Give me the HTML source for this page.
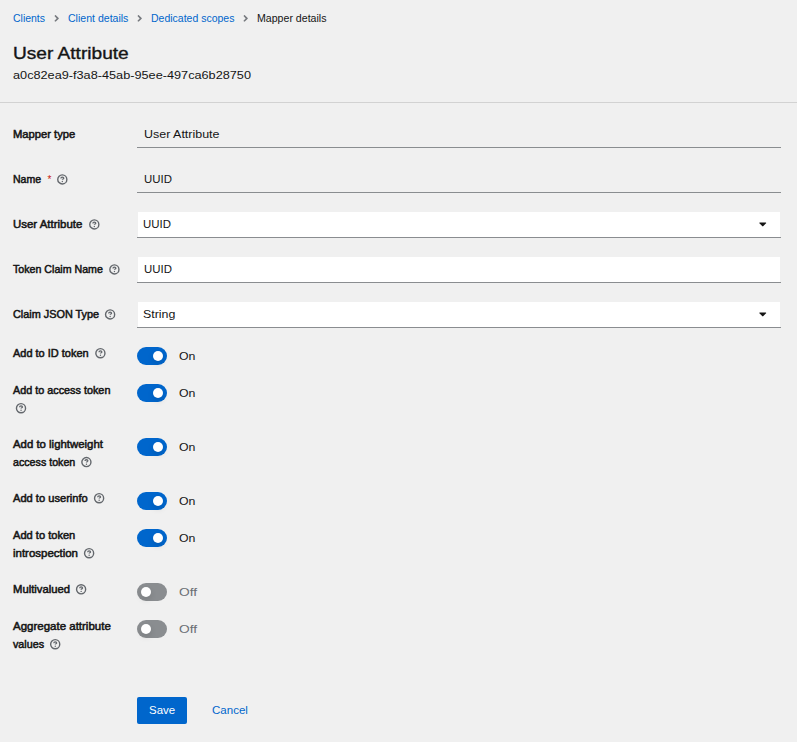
<!DOCTYPE html>
<html lang="en">
<head>
<meta charset="utf-8">
<title>Mapper details</title>
<style>
*{box-sizing:border-box;margin:0;padding:0}
html,body{width:797px;height:742px;overflow:hidden;background:#f0f0f0}
body{position:relative;font-family:"Liberation Sans",sans-serif;color:#151515;font-size:12px}
.t{position:absolute;white-space:nowrap;text-decoration:none;display:block;transform-origin:0 50%}
.chev{position:absolute;width:5.4px;height:10.8px}
.hr{position:absolute;left:0;top:102px;width:797px;height:1px;background:#d2d2d2}
.wb{position:absolute;left:137.8px;width:642.3px;height:25px;background:#fff}
.bl{position:absolute;left:137px;width:643.7px;height:1px;background:#8a8d90}
.caret{position:absolute;left:759.4px;width:7.5px;height:12px}
.help{position:absolute;width:14px;height:14px}
.sw{position:absolute;left:137px;width:30px;height:18px;border-radius:9px;background:#0066cc}
.sw.off{background:#8a8d90}
.sw i{position:absolute;top:4px;width:10.4px;height:10.4px;border-radius:50%;background:#fff;top:3.8px;box-shadow:0 3px 6px rgba(3,3,3,.12)}
.sw.on i{left:16px}
.sw.off i{left:4px}
.btn{position:absolute;left:137px;top:697px;width:50px;height:27px;background:#0066cc;border:0;border-radius:2px;font:inherit;display:block}
</style>
</head>
<body>
<nav class="breadcrumb" aria-label="Breadcrumb">
<a class="t" style="left:13.0px;top:10.79px;font-size:11px;line-height:14px;height:14px;transform:scaleX(0.9517);color:#0066cc;font-weight:normal">Clients</a>
<svg class="chev" style="left:53.6px;top:13px" viewBox="0 0 256 512"><path d="M224.3 273l-136 136c-9.4 9.4-24.6 9.4-33.9 0l-22.6-22.600c-9.400-9.400-9.400-24.600 0-33.900l96.400-96.400-96.400-96.400c-9.400-9.400-9.400-24.600 0-33.900L54.300 103c9.400-9.400 24.600-9.400 33.900 0l136 136c9.500 9.400 9.500 24.600.100 34z" fill="#777a7f"/></svg>
<a class="t" style="left:68.3px;top:10.79px;font-size:11px;line-height:14px;height:14px;transform:scaleX(0.9590);color:#0066cc;font-weight:normal">Client details</a>
<svg class="chev" style="left:137.2px;top:13px" viewBox="0 0 256 512"><path d="M224.3 273l-136 136c-9.4 9.4-24.6 9.4-33.9 0l-22.6-22.600c-9.400-9.400-9.400-24.600 0-33.900l96.400-96.400-96.400-96.400c-9.400-9.400-9.400-24.600 0-33.900L54.300 103c9.400-9.400 24.600-9.400 33.900 0l136 136c9.500 9.400 9.500 24.600.100 34z" fill="#777a7f"/></svg>
<a class="t" style="left:151.3px;top:10.79px;font-size:11px;line-height:14px;height:14px;transform:scaleX(0.9537);color:#0066cc;font-weight:normal">Dedicated scopes</a>
<svg class="chev" style="left:243.3px;top:13px" viewBox="0 0 256 512"><path d="M224.3 273l-136 136c-9.4 9.4-24.6 9.4-33.9 0l-22.6-22.600c-9.400-9.400-9.400-24.600 0-33.900l96.400-96.400-96.400-96.400c-9.400-9.400-9.400-24.600 0-33.900L54.300 103c9.400-9.400 24.600-9.400 33.900 0l136 136c9.500 9.400 9.500 24.600.100 34z" fill="#777a7f"/></svg>
<span class="t" style="left:257.3px;top:10.79px;font-size:11px;line-height:14px;height:14px;transform:scaleX(0.9632);color:#151515;font-weight:normal">Mapper details</span>
</nav>
<header class="head">
<h1 class="t" style="left:13.0px;top:42.66px;font-size:16px;line-height:22px;height:22px;transform:scaleX(1.1936);color:#151515;font-weight:normal;-webkit-text-stroke:0.35px #151515">User Attribute</h1>
<span class="t" style="left:13.0px;top:68.19px;font-size:11px;line-height:14px;height:14px;transform:scaleX(1.1546);color:#151515;font-weight:normal">a0c82ea9-f3a8-45ab-95ee-497ca6b28750</span>
</header>
<div class="hr"></div>
<form class="form">
<div class="group">
<label class="t" style="left:13.0px;top:127.36px;font-size:10.5px;line-height:14px;height:14px;transform:scaleX(1.0672);color:#151515;font-weight:normal;-webkit-text-stroke:0.5px #151515">Mapper type</label>
<div class="bl" style="top:147px"></div>
<span class="t" style="left:144.3px;top:127.49px;font-size:11px;line-height:14px;height:14px;transform:scaleX(1.1329);color:#151515;font-weight:normal">User Attribute</span>
</div>
<div class="group">
<label class="t" style="left:13.0px;top:172.36px;font-size:10.5px;line-height:14px;height:14px;transform:scaleX(1.0030);color:#151515;font-weight:normal;-webkit-text-stroke:0.5px #151515">Name</label>
<span class="t" style="left:47.6px;top:172.73px;font-size:10px;line-height:14px;height:14px;transform:scaleX(1.0000);color:#c9190b;font-weight:normal">*</span>
<svg class="help" style="left:55px;top:172px" viewBox="0 0 14 14"><g transform="translate(1.30 1.40)"><circle cx="6" cy="6" r="4.55" fill="none" stroke="#63676c" stroke-width="1.4"/><path d="M4.6 5c0-.85.6-1.350 1.450-1.350s1.400.500 1.400 1.100c0 .900-1.400.800-1.400 1.650" fill="none" stroke="#63676c" stroke-width="1.3"/><circle cx="6.05" cy="8.1" r=".7" fill="#63676c"/></g></svg>
<div class="bl" style="top:192px"></div>
<span class="t" style="left:144.4px;top:172.09px;font-size:11px;line-height:14px;height:14px;transform:scaleX(1.0375);color:#151515;font-weight:normal">UUID</span>
</div>
<div class="group">
<label class="t" style="left:13.0px;top:217.36px;font-size:10.5px;line-height:14px;height:14px;transform:scaleX(1.0892);color:#151515;font-weight:normal;-webkit-text-stroke:0.5px #151515">User Attribute</label>
<svg class="help" style="left:87px;top:217px" viewBox="0 0 14 14"><g transform="translate(1.30 1.40)"><circle cx="6" cy="6" r="4.55" fill="none" stroke="#63676c" stroke-width="1.4"/><path d="M4.6 5c0-.85.6-1.350 1.450-1.350s1.400.500 1.400 1.100c0 .900-1.400.800-1.400 1.650" fill="none" stroke="#63676c" stroke-width="1.3"/><circle cx="6.05" cy="8.1" r=".7" fill="#63676c"/></g></svg>
<div class="wb" style="top:212px"></div><div class="bl" style="top:237px"></div><svg class="caret" style="top:217.6px" viewBox="0 0 320 512"><path d="M31.3 192h257.3c17.8 0 26.7 21.5 14.1 34.1L174.1 354.8c-7.8 7.8-20.5 7.8-28.3 0L17.2 226.1C4.600 213.500 13.500 192 31.300 192z" fill="#151515"/></svg>
<span class="t" style="left:143.3px;top:216.99px;font-size:11px;line-height:14px;height:14px;transform:scaleX(1.0375);color:#151515;font-weight:normal">UUID</span>
</div>
<div class="group">
<label class="t" style="left:13.0px;top:262.36px;font-size:10.5px;line-height:14px;height:14px;transform:scaleX(1.0135);color:#151515;font-weight:normal;-webkit-text-stroke:0.5px #151515">Token Claim Name</label>
<svg class="help" style="left:107px;top:262px" viewBox="0 0 14 14"><g transform="translate(1.40 1.40)"><circle cx="6" cy="6" r="4.55" fill="none" stroke="#63676c" stroke-width="1.4"/><path d="M4.6 5c0-.85.6-1.350 1.450-1.350s1.400.500 1.400 1.100c0 .900-1.400.800-1.400 1.650" fill="none" stroke="#63676c" stroke-width="1.3"/><circle cx="6.05" cy="8.1" r=".7" fill="#63676c"/></g></svg>
<div class="wb" style="top:257px"></div><div class="bl" style="top:282px"></div>
<span class="t" style="left:144.4px;top:261.89px;font-size:11px;line-height:14px;height:14px;transform:scaleX(1.0375);color:#151515;font-weight:normal">UUID</span>
</div>
<div class="group">
<label class="t" style="left:13.0px;top:307.36px;font-size:10.5px;line-height:14px;height:14px;transform:scaleX(1.0342);color:#151515;font-weight:normal;-webkit-text-stroke:0.5px #151515">Claim JSON Type</label>
<svg class="help" style="left:103px;top:307px" viewBox="0 0 14 14"><g transform="translate(1.10 1.40)"><circle cx="6" cy="6" r="4.55" fill="none" stroke="#63676c" stroke-width="1.4"/><path d="M4.6 5c0-.85.6-1.350 1.450-1.350s1.400.500 1.400 1.100c0 .900-1.400.800-1.400 1.650" fill="none" stroke="#63676c" stroke-width="1.3"/><circle cx="6.05" cy="8.1" r=".7" fill="#63676c"/></g></svg>
<div class="wb" style="top:302px"></div><div class="bl" style="top:327px"></div><svg class="caret" style="top:307.6px" viewBox="0 0 320 512"><path d="M31.3 192h257.3c17.8 0 26.7 21.5 14.1 34.1L174.1 354.8c-7.8 7.8-20.5 7.8-28.3 0L17.2 226.1C4.600 213.500 13.500 192 31.300 192z" fill="#151515"/></svg>
<span class="t" style="left:143.4px;top:306.99px;font-size:11px;line-height:14px;height:14px;transform:scaleX(1.1270);color:#151515;font-weight:normal">String</span>
</div>
<div class="group">
<label class="t" style="left:13.0px;top:346.36px;font-size:10.5px;line-height:14px;height:14px;transform:scaleX(1.0443);color:#151515;font-weight:normal;-webkit-text-stroke:0.5px #151515">Add to ID token</label>
<svg class="help" style="left:93px;top:346px" viewBox="0 0 14 14"><g transform="translate(1.40 1.20)"><circle cx="6" cy="6" r="4.55" fill="none" stroke="#63676c" stroke-width="1.4"/><path d="M4.6 5c0-.85.6-1.350 1.450-1.350s1.400.500 1.400 1.100c0 .900-1.400.800-1.400 1.650" fill="none" stroke="#63676c" stroke-width="1.3"/><circle cx="6.05" cy="8.1" r=".7" fill="#63676c"/></g></svg>
<div class="sw on" style="top:347px"><i></i></div>
<span class="t" style="left:179.3px;top:349.29px;font-size:11px;line-height:14px;height:14px;transform:scaleX(1.1166);color:#151515;font-weight:normal">On</span>
</div>
<div class="group">
<label class="t" style="left:13.0px;top:383.36px;font-size:10.5px;line-height:14px;height:14px;transform:scaleX(1.0300);color:#151515;font-weight:normal;-webkit-text-stroke:0.5px #151515">Add to access token</label>
<svg class="help" style="left:14px;top:401px" viewBox="0 0 14 14"><g transform="translate(1.00 1.20)"><circle cx="6" cy="6" r="4.55" fill="none" stroke="#63676c" stroke-width="1.4"/><path d="M4.6 5c0-.85.6-1.350 1.450-1.350s1.400.500 1.400 1.100c0 .900-1.400.800-1.400 1.650" fill="none" stroke="#63676c" stroke-width="1.3"/><circle cx="6.05" cy="8.1" r=".7" fill="#63676c"/></g></svg>
<div class="sw on" style="top:384px"><i></i></div>
<span class="t" style="left:179.3px;top:386.29px;font-size:11px;line-height:14px;height:14px;transform:scaleX(1.1166);color:#151515;font-weight:normal">On</span>
</div>
<div class="group">
<label class="t" style="left:13.0px;top:437.36px;font-size:10.5px;line-height:14px;height:14px;transform:scaleX(1.0846);color:#151515;font-weight:normal;-webkit-text-stroke:0.5px #151515">Add to lightweight</label>
<label class="t" style="left:13.0px;top:455.36px;font-size:10.5px;line-height:14px;height:14px;transform:scaleX(1.0164);color:#151515;font-weight:normal;-webkit-text-stroke:0.5px #151515">access token</label>
<svg class="help" style="left:79px;top:455px" viewBox="0 0 14 14"><g transform="translate(1.40 1.10)"><circle cx="6" cy="6" r="4.55" fill="none" stroke="#63676c" stroke-width="1.4"/><path d="M4.6 5c0-.85.6-1.350 1.450-1.350s1.400.500 1.400 1.100c0 .900-1.400.800-1.400 1.650" fill="none" stroke="#63676c" stroke-width="1.3"/><circle cx="6.05" cy="8.1" r=".7" fill="#63676c"/></g></svg>
<div class="sw on" style="top:438px"><i></i></div>
<span class="t" style="left:179.3px;top:440.29px;font-size:11px;line-height:14px;height:14px;transform:scaleX(1.1166);color:#151515;font-weight:normal">On</span>
</div>
<div class="group">
<label class="t" style="left:13.0px;top:491.36px;font-size:10.5px;line-height:14px;height:14px;transform:scaleX(1.0589);color:#151515;font-weight:normal;-webkit-text-stroke:0.5px #151515">Add to userinfo</label>
<svg class="help" style="left:92px;top:491px" viewBox="0 0 14 14"><g transform="translate(1.10 1.20)"><circle cx="6" cy="6" r="4.55" fill="none" stroke="#63676c" stroke-width="1.4"/><path d="M4.6 5c0-.85.6-1.350 1.450-1.350s1.400.500 1.400 1.100c0 .900-1.400.800-1.400 1.650" fill="none" stroke="#63676c" stroke-width="1.3"/><circle cx="6.05" cy="8.1" r=".7" fill="#63676c"/></g></svg>
<div class="sw on" style="top:492px"><i></i></div>
<span class="t" style="left:179.3px;top:494.29px;font-size:11px;line-height:14px;height:14px;transform:scaleX(1.1166);color:#151515;font-weight:normal">On</span>
</div>
<div class="group">
<label class="t" style="left:13.0px;top:528.36px;font-size:10.5px;line-height:14px;height:14px;transform:scaleX(1.0565);color:#151515;font-weight:normal;-webkit-text-stroke:0.5px #151515">Add to token</label>
<label class="t" style="left:13.0px;top:546.36px;font-size:10.5px;line-height:14px;height:14px;transform:scaleX(1.0916);color:#151515;font-weight:normal;-webkit-text-stroke:0.5px #151515">introspection</label>
<svg class="help" style="left:82px;top:546px" viewBox="0 0 14 14"><g transform="translate(1.10 1.20)"><circle cx="6" cy="6" r="4.55" fill="none" stroke="#63676c" stroke-width="1.4"/><path d="M4.6 5c0-.85.6-1.350 1.450-1.350s1.400.500 1.400 1.100c0 .900-1.400.800-1.400 1.650" fill="none" stroke="#63676c" stroke-width="1.3"/><circle cx="6.05" cy="8.1" r=".7" fill="#63676c"/></g></svg>
<div class="sw on" style="top:529px"><i></i></div>
<span class="t" style="left:179.3px;top:531.29px;font-size:11px;line-height:14px;height:14px;transform:scaleX(1.1166);color:#151515;font-weight:normal">On</span>
</div>
<div class="group">
<label class="t" style="left:13.0px;top:582.36px;font-size:10.5px;line-height:14px;height:14px;transform:scaleX(1.0729);color:#151515;font-weight:normal;-webkit-text-stroke:0.5px #151515">Multivalued</label>
<svg class="help" style="left:74px;top:582px" viewBox="0 0 14 14"><g transform="translate(1.10 1.30)"><circle cx="6" cy="6" r="4.55" fill="none" stroke="#63676c" stroke-width="1.4"/><path d="M4.6 5c0-.85.6-1.350 1.450-1.350s1.400.500 1.400 1.100c0 .900-1.400.800-1.400 1.650" fill="none" stroke="#63676c" stroke-width="1.3"/><circle cx="6.05" cy="8.1" r=".7" fill="#63676c"/></g></svg>
<div class="sw off" style="top:583px"><i></i></div>
<span class="t" style="left:179.4px;top:585.29px;font-size:11px;line-height:14px;height:14px;transform:scaleX(1.2496);color:#6a6e73;font-weight:normal">Off</span>
</div>
<div class="group">
<label class="t" style="left:13.0px;top:619.36px;font-size:10.5px;line-height:14px;height:14px;transform:scaleX(1.0950);color:#151515;font-weight:normal;-webkit-text-stroke:0.5px #151515">Aggregate attribute</label>
<label class="t" style="left:13.0px;top:637.36px;font-size:10.5px;line-height:14px;height:14px;transform:scaleX(1.0211);color:#151515;font-weight:normal;-webkit-text-stroke:0.5px #151515">values</label>
<svg class="help" style="left:48px;top:637px" viewBox="0 0 14 14"><g transform="translate(1.20 1.20)"><circle cx="6" cy="6" r="4.55" fill="none" stroke="#63676c" stroke-width="1.4"/><path d="M4.6 5c0-.85.6-1.350 1.450-1.350s1.400.500 1.400 1.100c0 .900-1.400.800-1.400 1.650" fill="none" stroke="#63676c" stroke-width="1.3"/><circle cx="6.05" cy="8.1" r=".7" fill="#63676c"/></g></svg>
<div class="sw off" style="top:620px"><i></i></div>
<span class="t" style="left:179.4px;top:622.29px;font-size:11px;line-height:14px;height:14px;transform:scaleX(1.2496);color:#6a6e73;font-weight:normal">Off</span>
</div>
<div class="actions">
<button class="btn" type="button"><span class="t" style="left:11.8px;top:5.82px;font-size:11.5px;line-height:14px;height:14px;transform:scaleX(0.9955);color:#fff;font-weight:normal">Save</span></button>
<a class="t" style="left:211.9px;top:702.82px;font-size:11.5px;line-height:14px;height:14px;transform:scaleX(1.0024);color:#0066cc;font-weight:normal">Cancel</a>
</div>
</form>
</body>
</html>
